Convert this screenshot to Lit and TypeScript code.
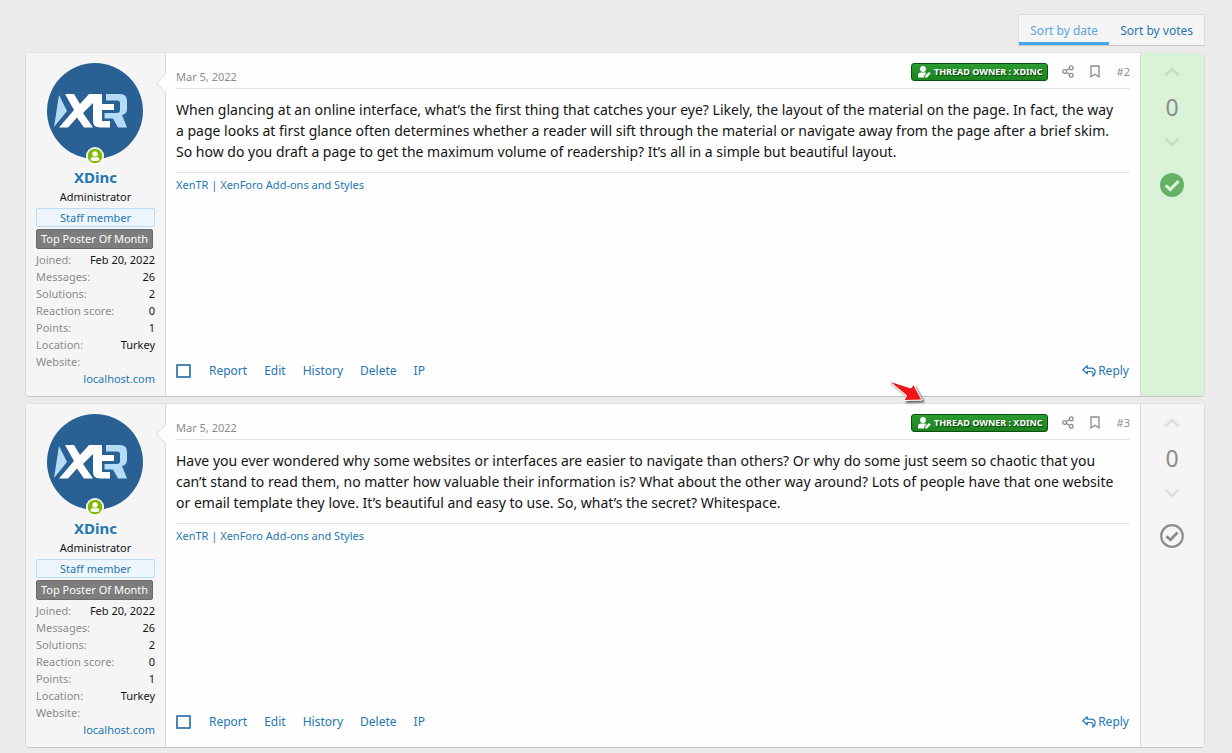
import { LitElement, html, css, svg, nothing } from "lit";
import { customElement, property, state } from "lit/decorators.js";

interface Post {
  number: number;
  date: string;
  text: string;
  solution: boolean;
}

const POSTS: Post[] = [
  {
    number: 2,
    date: "Mar 5, 2022",
    text: "When glancing at an online interface, what’s the first thing that catches your eye? Likely, the layout of the material on the page. In fact, the way a page looks at first glance often determines whether a reader will sift through the material or navigate away from the page after a brief skim. So how do you draft a page to get the maximum volume of readership? It’s all in a simple but beautiful layout.",
    solution: true,
  },
  {
    number: 3,
    date: "Mar 5, 2022",
    text: "Have you ever wondered why some websites or interfaces are easier to navigate than others? Or why do some just seem so chaotic that you can’t stand to read them, no matter how valuable their information is? What about the other way around? Lots of people have that one website or email template they love. It’s beautiful and easy to use. So, what’s the secret? Whitespace.",
    solution: false,
  },
];

const STATS: [string, string][] = [
  ["Joined:", "Feb 20, 2022"],
  ["Messages:", "26"],
  ["Solutions:", "2"],
  ["Reaction score:", "0"],
  ["Points:", "1"],
  ["Location:", "Turkey"],
];

const shared = css`
  * {
    box-sizing: border-box;
  }
  a {
    color: #2577b1;
    text-decoration: none;
  }
  button {
    font: inherit;
    border: 0;
    padding: 0;
    background: none;
    cursor: pointer;
  }
  svg {
    display: block;
  }
`;

@customElement("user-card")
export class UserCard extends LitElement {
  static styles = [
    shared,
    css`
      :host {
        display: block;
        padding: 10px 10px 9px;
        font-size: 11px;
        text-align: center;
      }
      .avatar {
        display: block;
        position: relative;
        width: 96px;
        margin: 0 11px;
      }
      .online {
        position: absolute;
        left: 50%;
        bottom: -6px;
        margin-left: -9px;
      }
      .name {
        margin: 8px 0 0;
        font-size: 15px;
        line-height: 20px;
        font-weight: 700;
      }
      .title {
        line-height: 19px;
      }
      .banner {
        border: 1px solid #b9dbf3;
        border-radius: 2px;
        background: #edf6fd;
        color: #2577b1;
        margin-top: 2px;
        font-size: 11px;
        line-height: 17px;
      }
      .top {
        background: #7d7d7d;
        border-color: #6a6a6a;
        color: #fff;
        margin-right: 2px;
        line-height: 18px;
        white-space: nowrap;
      }
      .stats {
        margin: 2px 0 0;
        line-height: 17px;
      }
      .row {
        display: flex;
        justify-content: space-between;
        flex-wrap: wrap;
      }
      dt {
        color: #8c8c8c;
      }
      dd {
        margin: 0 0 0 auto;
      }
      .wide {
        flex-basis: 100%;
        text-align: right;
      }
    `,
  ];

  render() {
    return html`
      <a class="avatar" href="#xdinc" aria-label="XDinc">
        <svg width="96" height="96" viewBox="0 0 96 96">
          <circle cx="48" cy="48" r="48" fill="#2a6195" />
          <path fill="#b5dcf7" d="M12 32L20 48L7 64Z" />
          <path fill="#fff" d="M18 31H27L33 41L42 31H55L36 50L46 64.500H37L30 54.500L21 64.500H12L27 47Z" />
          <path fill="#fff" d="M46 39L55 31V41H67V47H55V58H63V64.500H53Q46 64.500 46 58Z" />
          <path fill="#b5dcf7" d="M59 31H73Q80 31 80 38V46Q80 51 75 52L80 64.500H71L66 55.500H57.500V50H70Q73 50 73 47V40Q73 37.500 70 37.500H59Z" />
        </svg>
        <svg class="online" width="18" height="18" viewBox="0 0 18 18">
          <circle cx="9" cy="9" r="9" fill="#fff" />
          <circle cx="9" cy="9" r="7.300" fill="#7fb900" />
          <circle cx="9" cy="7" r="2.700" fill="#fff" />
          <path fill="#fff" d="M4.500 13.200C4.500 10.500 6 9.800 7 9.900Q9 11 11 9.900C12 9.800 13.500 10.500 13.500 13.200Q9 15 4.500 13.200Z" />
        </svg>
      </a>
      <h4 class="name"><a href="#xdinc">XDinc</a></h4>
      <div class="title">Administrator</div>
      <div class="banner">Staff member</div>
      <div class="banner top">Top Poster Of Month</div>
      <dl class="stats">
        ${STATS.map(([k, v]) => html`<div class="row"><dt>${k}</dt><dd>${v}</dd></div>`)}
        <div class="row"><dt>Website:</dt><dd class="wide"><a href="#site">localhost.com</a></dd></div>
      </dl>
    `;
  }
}

@customElement("vote-box")
export class VoteBox extends LitElement {
  @property({ type: Boolean, reflect: true }) solution = false;

  static styles = [
    shared,
    css`
      :host {
        display: flex;
        flex-direction: column;
        align-items: center;
        padding: 14px 1px 0 0;
        color: #8c8c8c;
      }
      .arrow {
        color: #dedede;
      }
      :host([solution]) .arrow {
        color: #c4dcc3;
      }
      .count {
        font-size: 23px;
        line-height: 30px;
        margin: 15px 0;
      }
      .check {
        margin-top: 26px;
        color: #8c8c8c;
      }
      :host([solution]) .check {
        color: #63b265;
      }
    `,
  ];

  render() {
    const chevron = (d: string) => html`
      <svg width="16" height="10" viewBox="0 0 16 10" fill="none" stroke="currentColor" stroke-width="2.500">${svg`<path d=${d} />`}</svg>`;
    return html`
      <button class="arrow" aria-label="Upvote">${chevron("M1.200 8.500L8 2L14.800 8.500")}</button>
      <span class="count">0</span>
      <button class="arrow" aria-label="Downvote">${chevron("M1.200 1.500L8 8L14.800 1.500")}</button>
      <button class="check" aria-label="Mark as solution">
        <svg width="24" height="24" viewBox="0 0 24 24" fill="none">
          ${this.solution
            ? svg`<circle cx="12" cy="12" r="12" fill="currentColor" /><path stroke="#daf3d8" stroke-width="3.200" d="M5.600 12.300L10.200 16.600L18.600 8.200" />`
            : svg`<circle cx="12" cy="12" r="10.800" stroke="currentColor" stroke-width="2.200" /><path stroke="currentColor" stroke-width="2.800" d="M6.400 12.300L10.400 15.800L17.600 8.600" />`}
        </svg>
      </button>
    `;
  }
}

@customElement("forum-post")
export class ForumPost extends LitElement {
  @property({ attribute: false }) post!: Post;

  static styles = [
    shared,
    css`
      :host {
        display: block;
      }
      .post {
        display: grid;
        grid-template-columns: 140px minmax(0, 1fr) 64px;
        border: 1px solid #dcdcdc;
        border-top-color: #e2e2e2;
        border-bottom-color: #c6c6c6;
        border-radius: 4px;
        background: #fefefe;
      }
      .user {
        background: #f5f5f5;
        border-right: 1px solid #d8d8d8;
        border-radius: 3px 0 0 3px;
        position: relative;
      }
      .notch {
        position: absolute;
        top: 20px;
        right: -1px;
      }
      .main {
        display: flex;
        flex-direction: column;
        padding: 0 10px 14px;
      }
      .head {
        display: flex;
        align-items: center;
        justify-content: space-between;
        height: 36px;
        border-bottom: 1px solid #e0e0e0;
        font-size: 11px;
        color: #8c8c8c;
      }
      .date {
        padding-top: 11px;
      }
      .tools {
        display: flex;
        align-items: center;
        padding-top: 2px;
      }
      .tools a {
        color: #8c8c8c;
      }
      .share {
        margin: 0 16px 0 14px;
      }
      .mark {
        margin-right: 17px;
      }
      .owner {
        display: flex;
        align-items: center;
        gap: 3px;
        height: 18px;
        padding: 0 4px 0 6px;
        border: 1px solid #0a4f10;
        border-radius: 3px;
        background: linear-gradient(#2c9b31, #1b831f);
        color: #fff;
        font-size: 9px;
        font-weight: 700;
        text-shadow: 1px 1px 1px #053d08;
        white-space: nowrap;
      }
      .text {
        margin: 10px 0;
        padding-right: 10px;
        font-size: 14px;
        line-height: 21px;
      }
      .sign {
        border-top: 1px solid #e0e0e0;
        font-size: 11px;
        line-height: 18px;
        padding-top: 3px;
      }
      .foot {
        margin-top: auto;
        display: flex;
        align-items: center;
        gap: 17px;
        font-size: 12px;
        line-height: 22px;
      }
      .pick {
        appearance: none;
        width: 15px;
        height: 14px;
        margin: 0 1px 0 0;
        border: 2px solid #4a87b5;
        border-radius: 1px;
        background: #fff;
      }
      .pick:checked {
        background: #4a87b5;
      }
      .reply {
        margin-left: auto;
        display: flex;
        align-items: center;
        gap: 2px;
        padding-right: 1px;
      }
      .votes {
        background: #f5f5f5;
        border-left: 1px solid #d8d8d8;
        border-radius: 0 3px 3px 0;
      }
      .votes[solution] {
        background: #daf3d8;
      }
    `,
  ];

  render() {
    const p = this.post;
    return html`
      <article class="post">
        <div class="user">
          <user-card></user-card>
          <svg class="notch" width="10" height="20" viewBox="0 0 10 20">
            <path fill="#fefefe" d="M10 0L0.500 10L10 20Z" />
            <path fill="none" stroke="#d8d8d8" d="M9.500 0.500L0.700 10L9.500 19.500" />
          </svg>
        </div>
        <div class="main">
          <header class="head">
            <time class="date">${p.date}</time>
            <div class="tools">
              <span class="owner">
                <svg width="13" height="12" viewBox="0 0 13 12" fill="#fff">
                  <circle cx="5" cy="3" r="2.900" />
                  <path d="M0 11.500V9.500Q0 6.600 3 6.600H7Q8 6.600 8.500 7L6.200 9.500V11.500Z" />
                  <path d="M7.200 11.500V9.800L11 6L12.700 7.600L9 11.500Z" />
                </svg>
                THREAD OWNER : XDINC
              </span>
              <a class="share" href="#share" aria-label="Share">
                <svg width="12" height="13" viewBox="0 0 12 13" fill="none" stroke="currentColor" stroke-width="1.300">
                  <circle cx="9.200" cy="2.800" r="1.900" />
                  <circle cx="2.700" cy="6.500" r="1.900" />
                  <circle cx="9.200" cy="10.200" r="1.900" />
                  <path d="M4.400 5.500L7.500 3.800M4.400 7.500L7.500 9.200" />
                </svg>
              </a>
              <a class="mark" href="#bookmark" aria-label="Bookmark">
                <svg width="10" height="13" viewBox="0 0 10 13" fill="none" stroke="currentColor" stroke-width="1.300">
                  <path d="M1 1H9V11.800L5 9.200L1 11.800Z" />
                </svg>
              </a>
              <a href="#post">#${p.number}</a>
            </div>
          </header>
          <p class="text">${p.text}</p>
          <div class="sign"><a href="#xentr">XenTR | XenForo Add-ons and Styles</a></div>
          <footer class="foot">
            <input class="pick" type="checkbox" aria-label="Select post" />
            ${["Report", "Edit", "History", "Delete", "IP"].map((t) => html`<a href="#action">${t}</a>`)}
            <a class="reply" href="#reply">
              <svg width="14" height="12" viewBox="0 0 14 12" fill="none" stroke="currentColor" stroke-width="1.200" stroke-linejoin="round">
                <path d="M0.800 4.800L5.300 0.800V3.200H9Q13.200 3.400 13.200 7.200Q13.200 9.500 10.700 11.200Q11.500 8.400 10.600 7.300Q10 6.500 8.500 6.500H5.300V8.800Z" />
              </svg>
              Reply
            </a>
          </footer>
        </div>
        <vote-box class="votes" ?solution=${p.solution}></vote-box>
      </article>
    `;
  }
}

@customElement("app-root")
export class AppRoot extends LitElement {
  @state() private sort = "date";

  static styles = [
    shared,
    css`
      :host {
        display: block;
        box-sizing: border-box;
        min-height: 100vh;
        padding: 14px 27px 5px 25px;
        background: #ebebeb;
        color: #141414;
        font-family: "Noto Sans", "Open Sans", sans-serif;
      }
      .tabs {
        display: flex;
        width: max-content;
        margin: 0 0 6px auto;
        border: 1px solid #dcdcdc;
        border-bottom-color: #c6c6c6;
        background: #f5f5f5;
      }
      .tab {
        padding: 5px 11px 0;
        font-size: 12px;
        line-height: 22px;
        color: #2577b1;
        border-bottom: 3px solid transparent;
      }
      .tab[aria-selected="true"] {
        color: #5ba7e0;
        border-bottom-color: #47a7eb;
      }
      .list {
        display: grid;
        gap: 6px;
      }
      .item {
        position: relative;
      }
      .pointer {
        position: absolute;
        right: 276px;
        top: -24px;
      }
    `,
  ];

  render() {
    return html`
      <div class="tabs" role="tablist">
        ${["date", "votes"].map(
          (s) => html`<button class="tab" role="tab" aria-selected=${this.sort === s} @click=${() => (this.sort = s)}>Sort by ${s}</button>`
        )}
      </div>
      <main class="list">
        ${POSTS.map(
          (p) => html`<div class="item">
            <forum-post .post=${p}></forum-post>
            ${p.number === 3
              ? html`<svg class="pointer" width="42" height="30" viewBox="0 0 42 30">
                  <defs>
                    <filter id="soft" x="-20%" y="-20%" width="150%" height="150%">
                      <feDropShadow dx="2" dy="2" stdDeviation="1.300" flood-color="#000" flood-opacity="0.600" />
                    </filter>
                  </defs>
                  <path filter="url(#soft)" fill="#f01414" stroke="#fff" stroke-width="1" d="M2 2L24 9L26.500 5.500L35 21L17 21.500L19.500 16.500Z" />
                </svg>`
              : nothing}
          </div>`
        )}
      </main>
    `;
  }
}
